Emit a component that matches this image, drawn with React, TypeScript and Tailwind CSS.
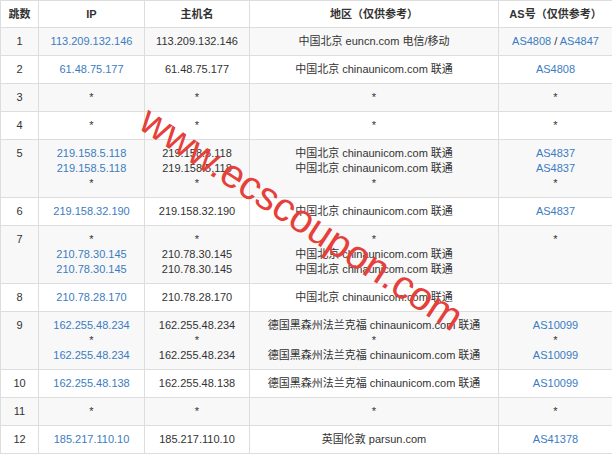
import React from 'react';

interface Hop {
  n: number;
  ip: string[];
  host: string[];
  region: string[];
  as: React.ReactNode[];
}

const R = '中国北京 chinaunicom.com 联通';
const DE = '德国黑森州法兰克福 chinaunicom.com 联通';

const As = ({ v }: { v: string }) => <span className="text-[#3b7cc1]">{v}</span>;

const hops: Hop[] = [
  {
    n: 1,
    ip: ['113.209.132.146'],
    host: ['113.209.132.146'],
    region: ['中国北京 euncn.com 电信/移动'],
    as: [
      <span key="a">
        <As v="AS4808" /> / <As v="AS4847" />
      </span>,
    ],
  },
  { n: 2, ip: ['61.48.75.177'], host: ['61.48.75.177'], region: [R], as: [<As key="a" v="AS4808" />] },
  { n: 3, ip: ['*'], host: ['*'], region: ['*'], as: ['*'] },
  { n: 4, ip: ['*'], host: ['*'], region: ['*'], as: ['*'] },
  {
    n: 5,
    ip: ['219.158.5.118', '219.158.5.118', '*'],
    host: ['219.158.5.118', '219.158.5.118', '*'],
    region: [R, R, '*'],
    as: [<As key="a" v="AS4837" />, <As key="b" v="AS4837" />, '*'],
  },
  { n: 6, ip: ['219.158.32.190'], host: ['219.158.32.190'], region: [R], as: [<As key="a" v="AS4837" />] },
  {
    n: 7,
    ip: ['*', '210.78.30.145', '210.78.30.145'],
    host: ['*', '210.78.30.145', '210.78.30.145'],
    region: ['*', R, R],
    as: ['*'],
  },
  { n: 8, ip: ['210.78.28.170'], host: ['210.78.28.170'], region: [R], as: [] },
  {
    n: 9,
    ip: ['162.255.48.234', '*', '162.255.48.234'],
    host: ['162.255.48.234', '*', '162.255.48.234'],
    region: [DE, '*', DE],
    as: [<As key="a" v="AS10099" />, '*', <As key="b" v="AS10099" />],
  },
  { n: 10, ip: ['162.255.48.138'], host: ['162.255.48.138'], region: [DE], as: [<As key="a" v="AS10099" />] },
  { n: 11, ip: ['*'], host: ['*'], region: ['*'], as: ['*'] },
  { n: 12, ip: ['185.217.110.10'], host: ['185.217.110.10'], region: ['英国伦敦 parsun.com'], as: [<As key="a" v="AS41378" />] },
];

const td = 'border border-[#dddddd] px-1 py-[6px] text-center align-top leading-[15px]';
const th = 'border border-[#dddddd] px-1 py-[6px] text-center font-bold leading-[14px] text-[#333]';

export default function App() {
  return (
    <div
      className="relative w-[612px] h-[455px] overflow-hidden bg-white text-[11px] text-[#333]"
      style={{ fontFamily: '"Liberation Sans", "Noto Sans CJK SC", sans-serif' }}
    >
      <table className="w-[612px] border-collapse table-fixed">
        <colgroup>
          <col className="w-[38px]" />
          <col className="w-[106px]" />
          <col className="w-[105px]" />
          <col className="w-[249px]" />
          <col className="w-[114px]" />
        </colgroup>
        <thead>
          <tr className="bg-white">
            <th className={th}>跳数</th>
            <th className={th}>IP</th>
            <th className={th}>主机名</th>
            <th className={th}>地区（仅供参考）</th>
            <th className={th}>AS号（仅供参考）</th>
          </tr>
        </thead>
        <tbody>
          {hops.map((h) => (
            <tr key={h.n} className={h.n % 2 === 1 ? 'bg-[#f8f8f8]' : 'bg-white'}>
              <td className={td}>{h.n}</td>
              <td className={td}>
                {h.ip.map((v, i) => (
                  <div key={i} className={v === '*' ? '' : 'text-[#3b7cc1]'}>
                    {v}
                  </div>
                ))}
              </td>
              <td className={td}>
                {h.host.map((v, i) => (
                  <div key={i}>{v}</div>
                ))}
              </td>
              <td className={td}>
                {h.region.map((v, i) => (
                  <div key={i}>{v}</div>
                ))}
              </td>
              <td className={td}>
                {h.as.map((v, i) => (
                  <div key={i}>{v}</div>
                ))}
              </td>
            </tr>
          ))}
        </tbody>
      </table>

      {/* watermark over the table */}
      <div className="pointer-events-none absolute left-[302px] top-[218px] -translate-x-1/2 -translate-y-1/2 rotate-[33deg] whitespace-nowrap text-[40px] leading-none text-[#e5403a]">
        www.ecscoupon.com
      </div>
    </div>
  );
}
